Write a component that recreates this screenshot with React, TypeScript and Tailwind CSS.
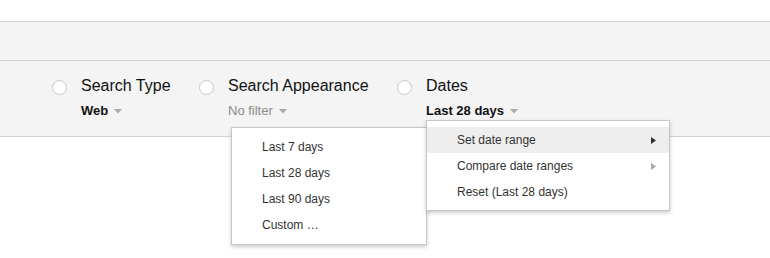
import React from 'react';

const Caret = ({ color }: { color: string }) => (
  <svg width="8" height="5" viewBox="0 0 8 5" className="ml-[6px] mt-[1px]">
    <path d="M0 0 L8 0 L4 4.5 Z" fill={color} />
  </svg>
);

const Arrow = ({ color }: { color: string }) => (
  <svg width="5" height="7" viewBox="0 0 5 7">
    <path d="M0 0 L5 3.5 L0 7 Z" fill={color} />
  </svg>
);

interface FilterProps {
  title: string;
  value: string;
  muted?: boolean;
  width: string;
}

const Filter: React.FC<FilterProps> = ({ title, value, muted, width }) => (
  <div className={`flex items-start ${width}`}>
    <div className="mt-[3px] h-[15px] w-[15px] shrink-0 rounded-full border border-[#c8c8c8] bg-white" />
    <div className="ml-[14px]">
      <div className="text-[16px] leading-[18px] text-[#111]">{title}</div>
      <div className="mt-[8px] flex items-center">
        <span className={`text-[13px] leading-[15px] ${muted ? 'text-[#8a8a8a]' : 'font-bold text-[#111]'}`}>{value}</span>
        <Caret color="#aaa" />
      </div>
    </div>
  </div>
);

export default function App() {
  const ranges = ['Last 7 days', 'Last 28 days', 'Last 90 days', 'Custom …'];
  const actions = [
    { label: 'Set date range', arrow: '#333', active: true },
    { label: 'Compare date ranges', arrow: '#aaa', active: false },
    { label: 'Reset (Last 28 days)', arrow: '', active: false },
  ];

  return (
    <div className="relative h-[258px] w-[770px] overflow-hidden bg-white font-['Liberation_Sans',Arial,sans-serif]">
      <div className="h-[21px]" />
      <div className="border-y border-[#d3d3d3] bg-[#f4f4f4]">
        <div className="h-[39px] border-b border-[#d3d3d3]" />
        <div className="flex h-[75px] pl-[52px] pt-[16px]">
          <Filter title="Search Type" value="Web" width="w-[147px]" />
          <Filter title="Search Appearance" value="No filter" muted width="w-[198px]" />
          <Filter title="Dates" value="Last 28 days" width="w-[200px]" />
        </div>
      </div>

      <div className="absolute left-[231px] top-[127px] w-[196px] border border-[#c6c6c6] bg-white pb-[6px] pt-[6px] shadow-[0_2px_4px_rgba(0,0,0,0.2)]">
        {ranges.map((r) => (
          <div key={r} className="flex h-[26px] items-center pl-[30px] text-[12px] text-[#333]">
            {r}
          </div>
        ))}
      </div>

      <div className="absolute left-[426px] top-[120px] w-[244px] border border-[#c6c6c6] bg-white pb-[5px] pt-[6px] shadow-[0_2px_4px_rgba(0,0,0,0.2)]">
        {actions.map((a) => (
          <div
            key={a.label}
            className={`flex h-[26px] items-center justify-between pl-[30px] pr-[13px] text-[12px] text-[#333] ${a.active ? 'bg-[#eeeeee]' : ''}`}
          >
            <span>{a.label}</span>
            {a.arrow && <Arrow color={a.arrow} />}
          </div>
        ))}
      </div>
    </div>
  );
}
